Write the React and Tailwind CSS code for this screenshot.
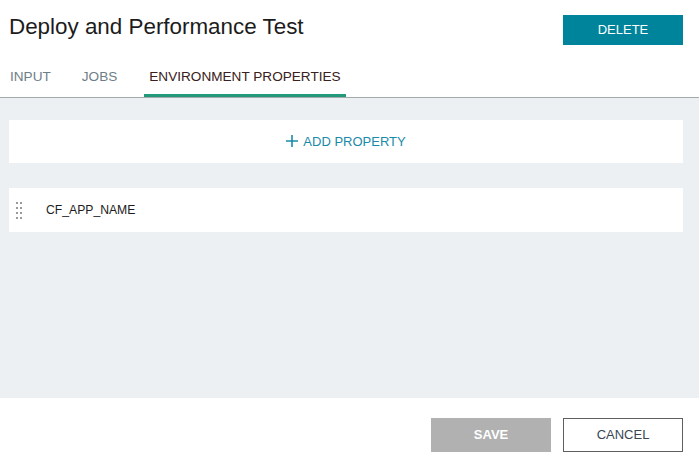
import { useState } from "react";

const font = { fontFamily: '"Liberation Sans", Arial, sans-serif' };

const DragHandle = () => (
  <div className="grid grid-cols-2 gap-x-[2px] gap-y-[3px]">
    {Array.from({ length: 8 }).map((_, i) => (
      <span key={i} className="w-[2px] h-[2px] bg-[#9a9a9a]" />
    ))}
  </div>
);

export default function App() {
  const [tab, setTab] = useState("env");
  const tabs = [
    { id: "input", label: "INPUT", cls: "" },
    { id: "jobs", label: "JOBS", cls: "ml-[31px]" },
    { id: "env", label: "ENVIRONMENT PROPERTIES", cls: "ml-[27px] px-[5px]" },
  ];

  return (
    <div className="w-[699px] h-[462px] bg-white flex flex-col" style={font}>
      <div className="flex items-start justify-between pl-[9px] pr-4 pt-[15px] h-[64px]">
        <h1 className="text-[22.4px] leading-[24px] text-[#1c1c1c]">
          Deploy and Performance Test
        </h1>
        <button className="w-[120px] h-[30px] bg-[#00849b] text-white text-[13px]">
          DELETE
        </button>
      </div>

      <div className="flex border-b border-[#a4a9ab] pl-[10px] h-[34px]">
        {tabs.map((t) => (
          <button
            key={t.id}
            onClick={() => setTab(t.id)}
            className={
              "text-[13.6px] h-full flex items-start pt-[3px] border-b-[3px] " +
              t.cls +
              (tab === t.id
                ? " border-[#22997a] text-[#3a2020]"
                : " border-transparent text-[#6e7e88]")
            }
          >
            {t.label}
          </button>
        ))}
      </div>

      <div className="flex-1 bg-[#edf0f3] px-[9px] pr-[16px] pt-[22px]">
        <button className="w-full h-[43px] bg-white flex items-center justify-center gap-[5px] text-[#1a8aa8] text-[13px]">
          <svg width="12" height="12" viewBox="0 0 12 12" className="mb-[1px]">
            <path d="M6 0v12M0 6h12" stroke="#1a8aa8" strokeWidth="1.6" />
          </svg>
          ADD PROPERTY
        </button>

        <div className="mt-[25px] h-[44px] bg-white flex items-center pl-[7px]">
          <DragHandle />
          <span className="ml-[24px] text-[12.2px] text-[#1c1c1c]">CF_APP_NAME</span>
        </div>
      </div>

      <div className="h-[64px] flex items-start justify-end gap-[12px] pr-[16px] pt-[20px]">
        <button className="w-[120px] h-[34px] bg-[#b1b1b1] text-white text-[13px] font-bold">
          SAVE
        </button>
        <button className="w-[120px] h-[34px] border border-[#5f5f5f] bg-white text-[#3a4654] text-[13px]">
          CANCEL
        </button>
      </div>
    </div>
  );
}
